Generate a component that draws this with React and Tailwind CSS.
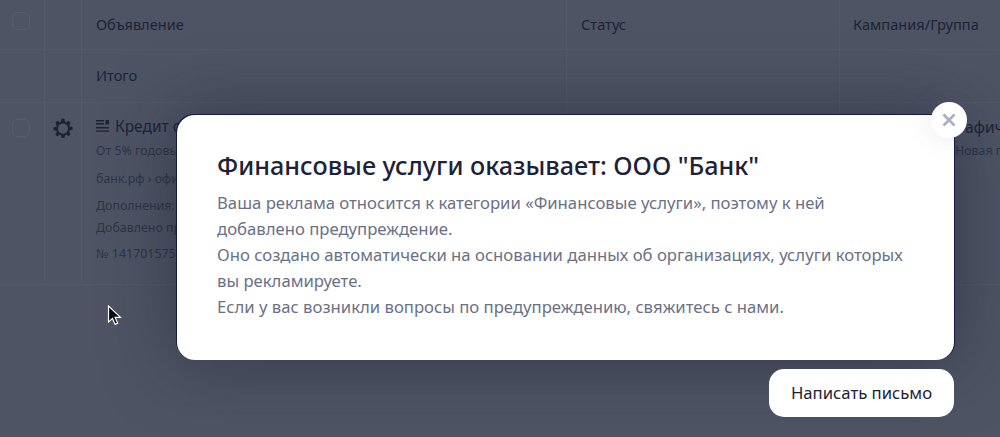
import React from 'react';

const font = { fontFamily: '"Noto Sans", "Liberation Sans", sans-serif' };

const GearIcon = () => (
  <svg width="20" height="20" viewBox="0 0 24 24" className="text-[#1d2337]">
    <path
      fill="currentColor"
      fillRule="evenodd"
      d="M10.2 1h3.6l.7 3.3 1.6.7L19 3.2 21.2 6l-1.7 2.6.7 1.6 3.3.7v3.2l-3.3.7-.7 1.6 1.7 2.6-2.2 2.8-2.9-1.8-1.6.7-.7 3.3h-3.6l-.7-3.3-1.6-.7L5 22.2 2.8 19.4l1.7-2.6-.7-1.6-3.3-.7v-3.2l3.3-.7.7-1.6L2.8 6 5 3.2 7.9 5l1.6-.7.7-3.3zM12 6.6a6.1 6.1 0 1 0 0 12.2 6.1 6.1 0 0 0 0-12.2z"
    />
  </svg>
);

const AdIcon = () => (
  <svg width="14" height="14" viewBox="0 0 14 14" className="text-[#1d2337]">
    <path fill="currentColor" d="M0 1h8v1.4H0zM9.5 1H13v4.4H9.5zM0 4h8v1.4H0zM0 8h13v1.4H0zM0 11.4h13v1.4H0z" />
  </svg>
);

const Cursor = () => (
  <svg width="16" height="22" viewBox="0 0 16 22" className="absolute left-[107px] top-[305px]">
    <path d="M1.5 1v16l4-3.6 2.6 6 2.6-1.1-2.6-5.9h5.4z" fill="#0b0d14" stroke="#fff" strokeWidth="1.2" />
  </svg>
);

const Checkbox = () => <div className="w-[18px] h-[18px] rounded-[5px] border border-[#575d6d]" />;

export default function App() {
  return (
    <div className="relative w-[1000px] h-[437px] overflow-hidden bg-[#4e5464] text-[#1d2337]" style={font}>
      {/* таблица под затемнением */}
      <div className="grid grid-cols-[45px_37px_485px_273px_160px] grid-rows-[50px_53px_182px] text-[14.6px]">
        <div className="flex items-center justify-center pb-[8px] pr-[2px] border-b border-r border-[#535969]">
          <Checkbox />
        </div>
        <div className="border-b border-r border-[#535969]" />
        <div className="flex items-center px-[14px] border-b border-r border-[#535969]">Объявление</div>
        <div className="flex items-center pl-[14px] border-b border-r border-[#535969]">Статус</div>
        <div className="flex items-center px-[13px] border-b border-[#535969] whitespace-nowrap">Кампания/Группа</div>

        <div className="border-b border-r border-[#535969]" />
        <div className="border-b border-r border-[#535969]" />
        <div className="flex items-center px-[14px] border-b border-r border-[#535969]">Итого</div>
        <div className="border-b border-r border-[#535969]" />
        <div className="border-b border-[#535969]" />

        <div className="flex justify-center pt-[16px] pr-[2px] border-b border-r border-[#535969]">
          <Checkbox />
        </div>
        <div className="flex justify-center pt-[15px] border-b border-r border-[#535969]">
          <GearIcon />
        </div>
        <div className="pl-[14px] pt-[13px] border-b border-r border-[#535969] overflow-hidden whitespace-nowrap">
          <div className="flex items-center gap-[5px] text-[15.5px] leading-[20px]">
            <AdIcon />
            <span>Кредит с</span>
          </div>
          <div className="mt-[6px] text-[12.4px] leading-[18px] text-[#2e3447]">От 5% годовых</div>
          <div className="mt-[10px] text-[12.4px] leading-[18px] text-[#2e3447]">банк.рф › офис</div>
          <div className="mt-[7px] text-[12.4px] leading-[22px] text-[#2e3447]">Дополнения:</div>
          <div className="text-[12.4px] leading-[22px] text-[#2e3447]">Добавлено пр</div>
          <div className="mt-[6px] text-[12.4px] leading-[18px] text-[#2e3447]">№ 1417015750</div>
        </div>
        <div className="border-b border-r border-[#535969]" />
        <div className="pl-[125px] pt-[14px] border-b border-[#535969] overflow-hidden whitespace-nowrap">
          <div className="text-[15.5px] leading-[20px]">афиче</div>
          <div className="mt-[5px] -ml-[10px] text-[12.4px] leading-[18px] text-[#2e3447]">Новая г</div>
        </div>
      </div>

      <Cursor />

      {/* модальное окно */}
      <div className="absolute left-[177px] top-[115px] w-[777px] h-[245px] pl-[40px] pr-[30px] pt-[33px] bg-white rounded-[18px] shadow-[-1px_-1px_0_#151a45,1px_0_0_#151a45,0_0_70px_rgba(25,30,50,0.5)]">
        <h1 className="text-[25.2px] leading-[34px] font-medium text-[#1d2337] whitespace-nowrap">Финансовые услуги оказывает: ООО "Банк"</h1>
        <p className="mt-[8px] text-[16.7px] leading-[26px] text-[#6b7186] whitespace-nowrap">
          Ваша реклама относится к категории «Финансовые услуги», поэтому к ней
          <br />
          добавлено предупреждение.
          <br />
          Оно создано автоматически на основании данных об организациях, услуги которых
          <br />
          вы рекламируете.
          <br />
          Если у вас возникли вопросы по предупреждению, свяжитесь с нами.
        </p>
      </div>

      <button className="absolute left-[931px] top-[102px] w-[36px] h-[36px] rounded-full bg-white shadow-[0_0_28px_rgba(90,95,125,0.14)] flex items-center justify-center">
        <svg width="14" height="14" viewBox="0 0 14 14">
          <path d="M1.5 1.5l11 11M12.5 1.5l-11 11" stroke="#a9aec2" strokeWidth="2.6" />
        </svg>
      </button>

      <button className="absolute left-[769px] top-[369px] w-[185px] h-[48px] rounded-[15px] bg-white text-[16.7px] text-[#1d2337]">
        Написать письмо
      </button>
    </div>
  );
}
